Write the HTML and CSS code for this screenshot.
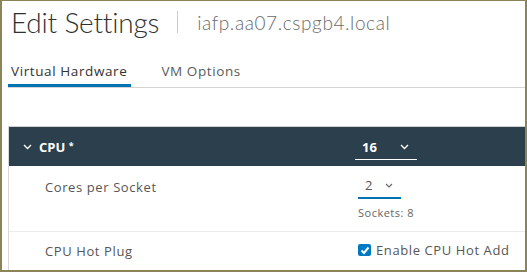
FILE: index.html
```html
<!DOCTYPE html>
<html lang="en">
<head>
    <meta charset="UTF-8">
    <meta name="viewport" content="width=device-width, initial-scale=1.0">
    <title>Edit Settings</title>
    <link rel="stylesheet" href="styles.css">
</head>
<body>
    <div class="frame">
        <div class="title-bar">
            <h1>Edit Settings</h1>
            <span class="divider"></span>
            <span class="host">iafp.aa07.cspgb4.local</span>
        </div>

        <div class="tabs">
            <span class="tab active">Virtual Hardware</span>
            <span class="tab">VM Options</span>
        </div>

        <div class="hw-table">
            <div class="row head">
                <div class="label">
                    <svg class="chev" width="9" height="6" viewBox="0 0 9 6"><path d="M1 1l3.5 3.5L8 1" fill="none" stroke="#fff" stroke-width="1.3"/></svg>
                    <span>CPU <sup>*</sup></span>
                </div>
                <div class="value">
                    <div class="select wide">
                        <span>16</span>
                        <svg width="9" height="6" viewBox="0 0 9 6"><path d="M1 1l3.5 3.5L8 1" fill="none" stroke="#fff" stroke-width="1.3"/></svg>
                    </div>
                </div>
            </div>

            <div class="row sub">
                <div class="label">Cores per Socket</div>
                <div class="value">
                    <div class="select narrow">
                        <span>2</span>
                        <svg width="8" height="5" viewBox="0 0 8 5"><path d="M1 1l3 3 3-3" fill="none" stroke="#666" stroke-width="1.1"/></svg>
                    </div>
                    <div class="hint">Sockets: 8</div>
                </div>
            </div>

            <div class="row sub last">
                <div class="label">CPU Hot Plug</div>
                <div class="value">
                    <label class="check">
                        <span class="box">
                            <svg width="10" height="9" viewBox="0 0 10 9"><path d="M1.5 4.5l2.5 2.5L8.5 1.5" fill="none" stroke="#fff" stroke-width="2"/></svg>
                        </span>
                        Enable CPU Hot Add
                    </label>
                </div>
            </div>
        </div>
    </div>
</body>
</html>
```

FILE: styles.css
```css
body {
    margin: 0;
    font-family: Lato, "Open Sans", sans-serif;
    background: #fff;
}
.frame {
    height: 272px;
    box-sizing: border-box;
    border: 2px solid #8b8456;
    border-top-width: 1px;
    padding-left: 6px;
    overflow: hidden;
}
.title-bar {
    display: flex;
    align-items: center;
    height: 32px;
    margin-top: 5px;
    padding-left: 3px;
}
h1 {
    margin: 0;
    font-size: 28px;
    font-weight: 300;
    color: #313131;
    letter-spacing: -0.2px;
}
.divider {
    width: 1px;
    height: 22px;
    background: #ccc;
    margin: 0 19px 0 18px;
}
.host {
    font-size: 19px;
    color: #6a6a6a;
    font-weight: 300;
    letter-spacing: 0.6px;
}
.tabs {
    display: flex;
    margin-top: 20px;
    border-bottom: 1px solid #d4d4d4;
    font-family: "Open Sans", sans-serif;
}
.tab {
    font-size: 13.5px;
    color: #5a5a5a;
    padding: 4px 3px 7px;
    margin-right: 28px;
    letter-spacing: 0.6px;
}
.tab.active {
    color: #333;
    box-shadow: inset 0 -3px 0 #0074b0;
    padding-right: 4px;
    margin-right: 27px;
}
.hw-table {
    margin-top: 38px;
    border-top: 1px solid #cfcfcf;
    border-left: 1px solid #d8d8d8;
    margin-right: -4px;
    font-family: "Open Sans", sans-serif;
}
.row {
    display: grid;
    grid-template-columns: 346px 1fr;
}
.row.head {
    background: #2b3f4c;
    height: 39px;
    color: #fff;
    font-weight: 700;
    font-size: 13px;
}
.row.head .label {
    display: flex;
    align-items: center;
    padding-left: 14px;
    gap: 7px;
}
.row.head sup {
    font-size: 9px;
    vertical-align: 3px;
}
.row.head .value {
    padding-top: 11px;
}
.select {
    display: flex;
    justify-content: space-between;
    align-items: center;
}
.select.wide {
    width: 62px;
    box-sizing: border-box;
    padding: 0 8px 3px 7px;
    border-bottom: 1px solid #fff;
}
.select.narrow {
    width: 43px;
    box-sizing: border-box;
    padding: 0 8px 3px 7px;
    margin-left: 3px;
    border-bottom: 2px solid #0074b0;
    color: #555;
    font-size: 13px;
}
.row.sub {
    font-size: 13px;
    color: #565656;
    border-bottom: 1px solid #ebebeb;
    letter-spacing: 0.6px;
}
.row.sub .label {
    padding-left: 36px;
}
.row.sub:nth-child(2) {
    padding: 10px 0 11px;
}
.row.sub:nth-child(2) .label {
    padding-top: 2px;
}
.hint {
    font-size: 11px;
    color: #666;
    margin-top: 6px;
    margin-left: 3px;
    letter-spacing: 0.5px;
}
.row.last {
    border-bottom: none;
    padding-top: 10px;
    height: 40px;
}
.check {
    display: flex;
    align-items: center;
    gap: 5px;
    margin-left: 3px;
    margin-top: -1px;
    font-size: 13px;
    color: #565656;
}
.box {
    width: 13px;
    height: 12px;
    border-radius: 2px;
    background: #0079c2;
    display: flex;
    align-items: center;
    justify-content: center;
}
```
